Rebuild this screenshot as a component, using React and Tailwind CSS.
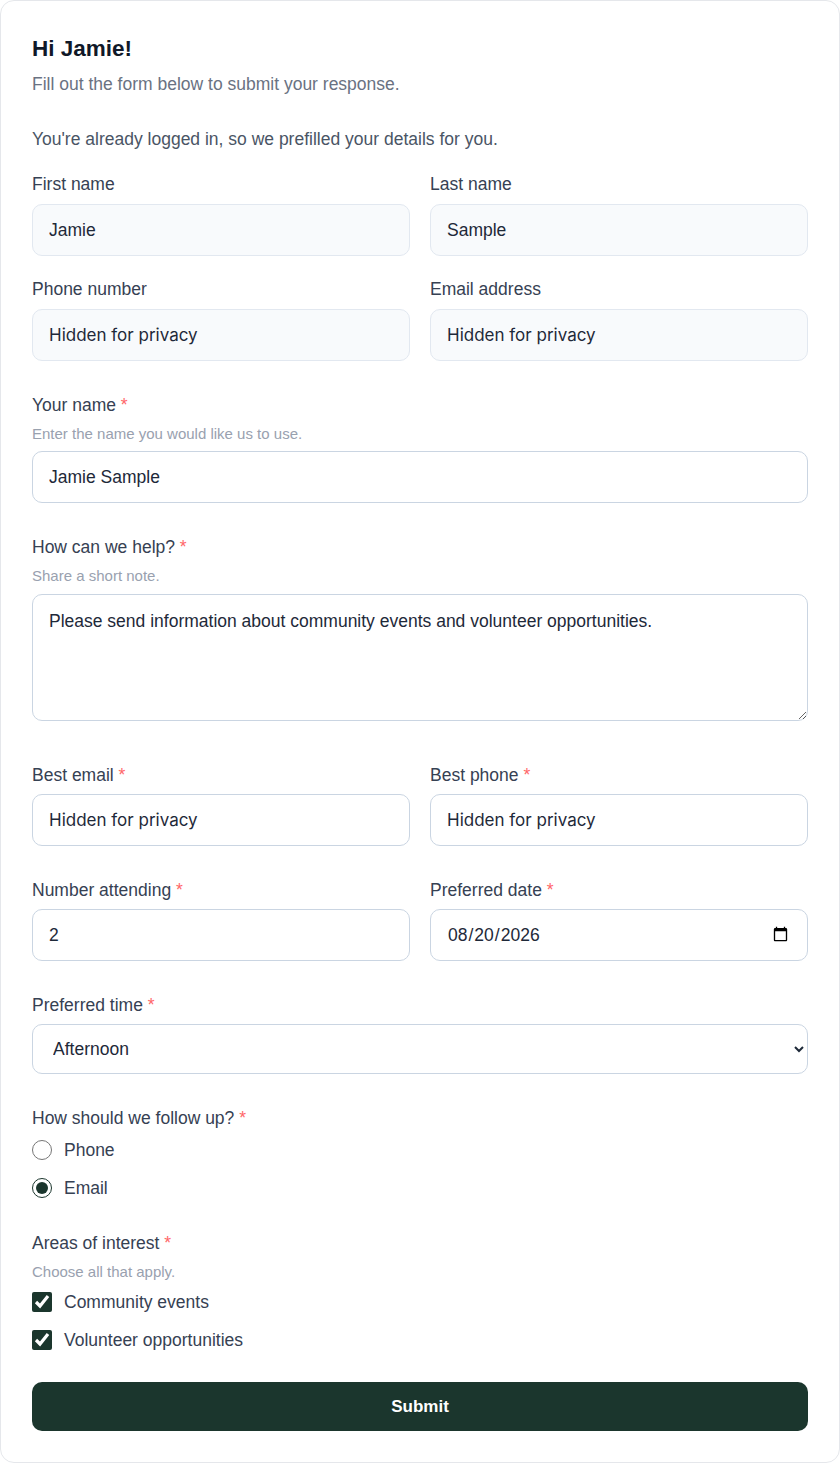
import React, { useState } from "react";

const font = { fontFamily: '"Liberation Sans", Arial, sans-serif' };

const Req = () => <span className="text-red-400"> *</span>;

const Label = ({ children, required, htmlFor }) => (
  <label htmlFor={htmlFor} className="block text-[17.5px] leading-6 text-gray-700">
    {children}
    {required && <Req />}
  </label>
);

const Hint = ({ children, className = "mt-[7px]" }) => (
  <p className={`${className} text-[15px] leading-5 text-gray-400`}>{children}</p>
);

const prefilled =
  "block w-full h-[52px] rounded-[10px] border border-slate-200 bg-slate-50 px-4 text-[17.5px] text-gray-800 outline-none";
const field =
  "block w-full h-[52px] rounded-[10px] border border-slate-300 bg-white px-4 text-[17.5px] text-gray-800 outline-none";
const hidden = "font-['Inter',sans-serif] !text-[17px] text-gray-700";

const App = () => {
  const [name, setName] = useState("Jamie Sample");
  const [note, setNote] = useState(
    "Please send information about community events and volunteer opportunities."
  );
  const [count, setCount] = useState("2");
  const [date, setDate] = useState("2026-08-20");
  const [time, setTime] = useState("Afternoon");
  const [follow, setFollow] = useState("email");
  const [areas, setAreas] = useState({ community: true, volunteer: true });

  return (
    <div style={font} className="w-full bg-white">
      <form
        onSubmit={(e) => e.preventDefault()}
        className="w-full rounded-[14px] border border-gray-200 bg-white px-[31px] pt-[34px] pb-[31px]"
      >
        {/* Header */}
        <h1 className="text-[22.5px] leading-7 font-bold text-gray-900">Hi Jamie!</h1>
        <p className="mt-[9px] text-[17.5px] leading-6 text-gray-500">
          Fill out the form below to submit your response.
        </p>
        <p className="mt-[31px] text-[17.5px] leading-6 text-gray-600">
          You're already logged in, so we prefilled your details for you.
        </p>

        {/* Prefilled details */}
        <div className="mt-[21px] grid grid-cols-2 gap-x-5 gap-y-[21px]">
          <div>
            <Label>First name</Label>
            <input className={`mt-2 ${prefilled}`} value="Jamie" readOnly />
          </div>
          <div>
            <Label>Last name</Label>
            <input className={`mt-2 ${prefilled}`} value="Sample" readOnly />
          </div>
          <div>
            <Label>Phone number</Label>
            <input className={`mt-2 ${prefilled} ${hidden}`} value="Hidden for privacy" readOnly />
          </div>
          <div>
            <Label>Email address</Label>
            <input className={`mt-2 ${prefilled} ${hidden}`} value="Hidden for privacy" readOnly />
          </div>
        </div>

        <div className="mt-8">
          <Label required>Your name</Label>
          <Hint>Enter the name you would like us to use.</Hint>
          <input
            className={`mt-[7px] ${field}`}
            value={name}
            onChange={(e) => setName(e.target.value)}
          />
        </div>

        <div className="mt-8">
          <Label required>How can we help?</Label>
          <Hint>Share a short note.</Hint>
          <textarea
            className="mt-2 block w-full h-[127px] rounded-[10px] border border-slate-300 bg-white px-4 py-[14px] text-[17.5px] leading-6 text-gray-800 outline-none"
            value={note}
            onChange={(e) => setNote(e.target.value)}
          />
        </div>

        <div className="mt-[42px] grid grid-cols-2 gap-x-5 gap-y-8">
          <div>
            <Label required>Best email</Label>
            <input className={`mt-[7px] ${field} ${hidden}`} value="Hidden for privacy" readOnly />
          </div>
          <div>
            <Label required>Best phone</Label>
            <input className={`mt-[7px] ${field} ${hidden}`} value="Hidden for privacy" readOnly />
          </div>
          <div>
            <Label required>Number attending</Label>
            <input
              type="number"
              className={`mt-[7px] ${field}`}
              value={count}
              onChange={(e) => setCount(e.target.value)}
            />
          </div>
          <div>
            <Label required>Preferred date</Label>
            <input
              type="date"
              className={`mt-[7px] ${field}`}
              value={date}
              onChange={(e) => setDate(e.target.value)}
            />
          </div>
        </div>

        <div className="mt-8">
          <Label required>Preferred time</Label>
          <select
            className="mt-[7px] block w-full h-[50px] rounded-[10px] border border-slate-300 bg-white px-4 text-[17.5px] text-gray-800 outline-none"
            value={time}
            onChange={(e) => setTime(e.target.value)}
          >
            <option>Morning</option>
            <option>Afternoon</option>
            <option>Evening</option>
          </select>
        </div>

        {/* Follow up */}
        <fieldset className="mt-8">
          <legend className="text-[17.5px] leading-6 text-gray-700">
            How should we follow up?
            <Req />
          </legend>
          <div className="mt-2 flex flex-col gap-[14px]">
            {[
              { id: "phone", label: "Phone" },
              { id: "email", label: "Email" },
            ].map((o) => (
              <label key={o.id} className="flex h-6 items-center gap-3 text-[17.5px] text-gray-700">
                <input
                  type="radio"
                  name="follow"
                  className="m-0 h-5 w-5 accent-[#1b362d]"
                  checked={follow === o.id}
                  onChange={() => setFollow(o.id)}
                />
                {o.label}
              </label>
            ))}
          </div>
        </fieldset>

        {/* Areas of interest */}
        <fieldset className="mt-[31px]">
          <legend className="text-[17.5px] leading-6 text-gray-700">
            Areas of interest
            <Req />
          </legend>
          <Hint className="mt-[7px]">Choose all that apply.</Hint>
          <div className="mt-2 flex flex-col gap-[14px]">
            {[
              { id: "community", label: "Community events" },
              { id: "volunteer", label: "Volunteer opportunities" },
            ].map((o) => (
              <label key={o.id} className="flex h-6 items-center gap-3 text-[17.5px] text-gray-700">
                <input
                  type="checkbox"
                  className="m-0 h-5 w-5 accent-[#1b362d]"
                  checked={areas[o.id]}
                  onChange={() => setAreas({ ...areas, [o.id]: !areas[o.id] })}
                />
                {o.label}
              </label>
            ))}
          </div>
        </fieldset>

        <button
          type="submit"
          className="mt-[30px] block h-[49px] w-full rounded-[10px] bg-[#1b362d] text-[17px] font-bold text-white"
        >
          Submit
        </button>
      </form>
    </div>
  );
};

export default App;
